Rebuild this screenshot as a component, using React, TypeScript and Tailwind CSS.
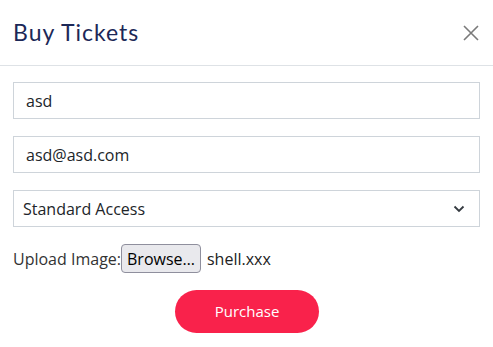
export default function App() {
  return (
    <div className="w-[493px] h-[347px] bg-white font-['Open_Sans',sans-serif] text-[#212529]">
      <div className="flex h-[66px] items-center justify-between border-b border-[#dee2e6] pl-[13px] pr-[14px]">
        <h2 className="font-['Lato',sans-serif] text-[23px] font-normal text-[#1c2857] tracking-[1px]">Buy Tickets</h2>
        <button type="button" className="flex h-4 w-4 items-center justify-center text-[#7a7a7a]">
          <svg width="16" height="16" viewBox="0 0 16 16" fill="none" stroke="currentColor" strokeWidth="1.6">
            <path d="M1 1L15 15M15 1L1 15" />
          </svg>
        </button>
      </div>
      <div className="flex flex-col gap-[17px] px-[13px] pt-[16px]">
        <input
          type="text"
          defaultValue="asd"
          className="h-[37px] w-full border border-[#ced4da] px-[12px] text-[16px] text-[#212529] outline-none"
        />
        <input
          type="text"
          defaultValue="asd@asd.com"
          className="h-[37px] w-full border border-[#ced4da] px-[12px] text-[16px] text-[#212529] outline-none"
        />
        <div className="flex h-[37px] w-full items-center justify-between border border-[#ced4da] pl-[9px] pr-[14px] text-[16px]">
          <span>Standard Access</span>
          <svg width="12" height="8" viewBox="0 0 12 8" fill="none" stroke="#343a40" strokeWidth="1.8">
            <path d="M1.5 1.5L6 6L10.5 1.5" />
          </svg>
        </div>
        <div className="flex h-[29px] items-center text-[16px] text-[#333]">
          <span>Upload Image:</span>
          <button
            type="button"
            className="h-[29px] rounded-[4px] border border-[#8f8f9d] bg-[#e9e9ed] px-[5px] text-[16px] text-black"
          >
            Browse…
          </button>
          <span className="ml-[6px] text-[#222]">shell.xxx</span>
        </div>
        <div className="flex justify-center">
          <button
            type="button"
            className="ml-[1px] h-[43px] w-[144px] rounded-full bg-[#f9224b] text-[15px] text-white"
          >
            Purchase
          </button>
        </div>
      </div>
    </div>
  );
}
